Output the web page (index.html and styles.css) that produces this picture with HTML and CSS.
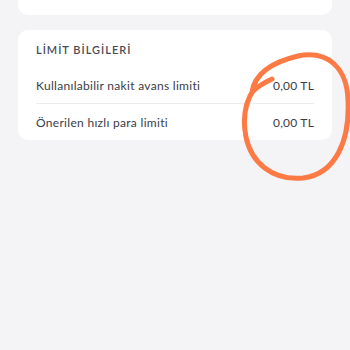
FILE: index.html
```html
<!DOCTYPE html>
<html lang="tr">
<head>
<meta charset="utf-8">
<link rel="stylesheet" href="styles.css">
</head>
<body>
<div class="page">
  <div class="card card-top"></div>
  <div class="card limits">
    <div class="title">LİMİT BİLGİLERİ</div>
    <div class="row">
      <span class="label">Kullanılabilir nakit avans limiti</span>
      <span class="value">0,00 TL</span>
    </div>
    <div class="row">
      <span class="label">Önerilen hızlı para limiti</span>
      <span class="value">0,00 TL</span>
    </div>
  </div>
</div>
<svg class="scribble" width="350" height="350" viewBox="0 0 350 350">
  <path d="M272 79 Q259 85 252 92 Q256 66 298 56 C328 50 347 68 348 100 C350 140 336 174 303 178 C272 181 251 162 246 137 C242 117 246 101 254 89" fill="none" stroke="#fd7a44" stroke-width="5" stroke-linecap="round" stroke-linejoin="round"/>
</svg>
</body>
</html>
```
FILE: styles.css
```css
html, body {
  margin: 0;
  padding: 0;
  background: #f4f4f7;
  width: 350px;
  height: 350px;
  overflow: hidden;
  font-family: "Lato", "Open Sans", sans-serif;
}
.page {
  padding: 0 18px;
  display: flex;
  flex-direction: column;
  gap: 15px;
}
.card {
  background: #ffffff;
  border-radius: 10px;
}
.card-top {
  height: 40px;
  margin-top: -25px;
}
.limits {
  padding: 0 18px;
}
.title {
  padding: 13px 0 11px;
  line-height: 14px;
  font-size: 11px;
  font-weight: 600;
  letter-spacing: 1px;
  color: #4b4b56;
}
.row {
  display: flex;
  justify-content: space-between;
  align-items: center;
  height: 35px;
  font-size: 12px;
  letter-spacing: 0.3px;
  color: #3c3c46;
}
.row + .row {
  border-top: 1px solid #ececf0;
  height: 36px;
}
.value {
  letter-spacing: 0.2px;
}
.scribble {
  position: absolute;
  left: 0;
  top: 0;
  pointer-events: none;
}
```
